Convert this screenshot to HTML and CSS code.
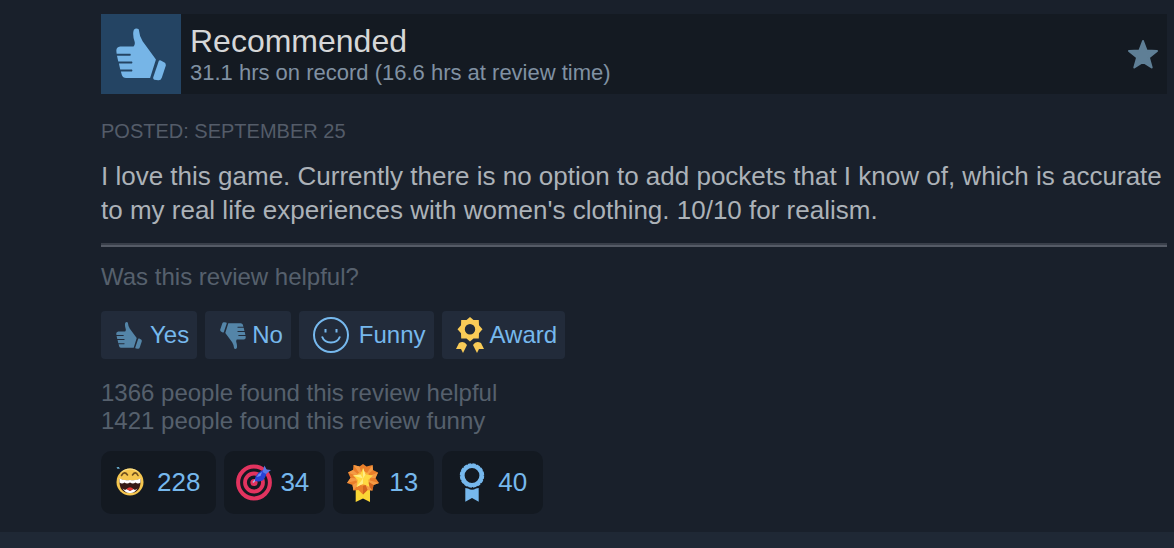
FILE: index.html
```html
<!DOCTYPE html>
<html lang="en">
<head>
  <meta charset="UTF-8" />
  <title>Review</title>
  <meta name="viewport" content="width=device-width, initial-scale=1.0" />
  <link rel="stylesheet" href="styles.css">
</head>
<body>

<!-- Shared icons -->
<svg class="icon-defs" aria-hidden="true">
  <symbol id="thumb" viewBox="48 42 154 161">
    <path d="M103 46Q110 39 118 45Q120 66 130 82L171 138L153 195H79Q69 195 66 186L63 175H97Q100 172 97 169H61L57 150H97Q100 147 97 144H55L51 126H92Q95 123 92 120H50L49 111Q49 99 61 98H102Q108 92 105 82Q98 60 103 46Z"/>
    <path d="M180 142Q182 139 186 141L197 147Q203 151 201 158L189 194Q186 203 178 202L166 200Q161 198 163 192Z"/>
  </symbol>
</svg>

<article class="review">
  <header class="review-header">
    <div class="thumb-box">
      <svg class="thumb-big"><use href="#thumb"/></svg>
    </div>
    <div class="verdict">
      <h1 class="title">Recommended</h1>
      <p class="hours">31.1 hrs on record (16.6 hrs at review time)</p>
    </div>
    <svg class="star" viewBox="0 0 30 29">
      <path d="M15 1L18.6 10.6L29 11L20.9 17.5L23.700 27.500L15 21.800L6.300 27.500L9.100 17.500L1 11L11.400 10.600Z"/>
    </svg>
  </header>

  <p class="posted">Posted: September 25</p>
  <p class="content">I love this game. Currently there is no option to add pockets that I know of, which is accurate to my real life experiences with women's clothing. 10/10 for realism.</p>

  <hr class="divider">

  <p class="question">Was this review helpful?</p>
  <div class="controls">
    <button class="btn" type="button">
      <svg class="thumb-small"><use href="#thumb"/></svg>
      Yes
    </button>
    <button class="btn btn-no" type="button">
      <svg class="thumb-small thumb-down"><use href="#thumb"/></svg>
      No
    </button>
    <button class="btn btn-funny" type="button">
      <svg class="smile" viewBox="0 0 36 36">
        <circle cx="18" cy="18" r="17"/>
        <path d="M12.500 12v3.500M23.500 12v3.500M9 19.500C12 27.500 24 27.500 27 19.500"/>
      </svg>
      Funny
    </button>
    <button class="btn btn-award" type="button">
      <svg class="award" viewBox="0 0 29 37">
        <path fill-rule="evenodd" d="M15 0L18.500 3L23.800 3L24 8.300L27.500 12.300L24 16.300L23.800 21.600L18.500 21.600L15 24.600L11.500 21.600L6.200 21.600L6 16.300L2.500 12.300L6 8.300L6.200 3L11.500 3ZM15 7.100a5.200 5.200 0 1 0 0 10.400a5.200 5.200 0 1 0 0-10.400Z"/>
        <path d="M1 32L4 26Q9 23 12 28L8 36L6 32ZM29 32L26 26Q21 23 18 28L22 36L24 32Z"/>
      </svg>
      Award
    </button>
  </div>

  <p class="stats">1366 people found this review helpful<br>1421 people found this review funny</p>

  <div class="awards">
    <button class="pill" type="button">
      <!-- laughing face -->
      <svg class="pill-icon" viewBox="0 0 36 36">
        <circle cx="17" cy="18" r="13.500" fill="#f5c64f"/>
        <path d="M7 9A13.500 13.500 0 0 1 27 9Q17 2 7 9Z" fill="#fbe08a"/>
        <path d="M8.500 11.500Q11.500 6.500 14.500 11M19.500 11Q22.500 6.500 25 11.500" fill="none" stroke="#72511f" stroke-width="1.600" stroke-linecap="round"/>
        <path d="M6.500 15Q17 18 27.500 15Q28.500 29 17 29Q5.500 29 6.500 15Z" fill="#351b17"/>
        <path d="M6.500 14.500Q11 17 17 16Q23 17 27.500 14.500V18.500Q25 20.500 22.500 18.500Q20 20.500 17 18.500Q14 20.500 11.500 18.500Q9 20.500 6.500 18.500Z" fill="#fff"/>
        <path d="M9.500 24.500L12 26L14 25L17 27L20 25L22 26L24.500 24.500Q21 29.500 17 29Q13 29.500 9.500 24.500Z" fill="#fff"/>
        <path d="M13.500 25Q17 21.500 20.500 25Q17 28 13.500 25Z" fill="#e23a35"/>
        <path d="M3.500 3.500L5.500 3L7 4.500L4.500 4.800Z" fill="#78c8ee"/>
      </svg>
      228
    </button>
    <button class="pill" type="button">
      <!-- target with dart -->
      <svg class="pill-icon" viewBox="0 0 36 36">
        <g fill="none" stroke="#e2335f">
          <circle cx="18" cy="18.500" r="15.900" stroke-width="4"/>
          <circle cx="18" cy="18.500" r="9" stroke-width="3.800"/>
        </g>
        <circle cx="18" cy="18.500" r="3.600" fill="#e2335f"/>
        <path d="M17 18.500L21 14" stroke="#a8b8ec" stroke-width="1.500"/>
        <path d="M19 17Q18.500 11 25 7L28.500 5.500L30.500 9.500Q28.500 18 22 17.500Z" fill="#2842d5"/>
        <path d="M20.500 13Q22 9.500 26 8L24.500 12Z" fill="#6f8df3"/>
        <path d="M26.500 8L28.500 1.500L30.500 5.500L35 6L30 10Z" fill="#5878e6"/>
      </svg>
      34
    </button>
    <button class="pill" type="button">
      <!-- gold rosette -->
      <svg class="pill-icon" viewBox="0 -1 36 36">
        <path d="M10.700 23H25V37L18 33.500L10.700 37Z" fill="#fbd735"/>
        <path d="M18 -1L21.500 1.500L27.500 0L28 5L33 7.500L30.500 13L34 18L28.500 20L27.500 25.500L22.500 25L18 29.500L13.500 25L8.500 25.500L7.500 20L2 18L5.500 13L3 7.500L8 5L8.500 0L14.500 1.500Z" fill="#ea7f2a"/>
        <path d="M18 13.500L8.500 0L14.500 1.500ZM18 13.500L27.500 0L28 5ZM18 13.500L33 7.500L30.500 13ZM18 13.500L34 18L28.500 20ZM18 13.500L27.500 25.500L22.500 25ZM18 13.500L8.500 25.500L7.500 20ZM18 13.500L2 18L5.500 13ZM18 13.500L3 7.500L8 5Z" fill="#f59b45"/>
        <path d="M18 13.500L22.500 25L18 29.500ZM18 13.500L27.500 25.500L28.500 20Z" fill="#d2641f"/>
        <circle cx="18" cy="13.500" r="7" fill="#fbb238"/>
        <path d="M18 3L20.500 9.500L28 10.500L23 15L24.500 22L18 18.800L11.500 22L13 15L8 10.500L15.500 9.500Z" fill="#ffd943"/>
        <path d="M18 3L20.500 9.500L18 13.500ZM8 10.500L15.500 9.500L18 13.500ZM11.500 22L18 18.800V13.500Z" fill="#ffec84"/>
      </svg>
      13
    </button>
    <button class="pill" type="button">
      <!-- blue ribbon -->
      <svg class="pill-icon" viewBox="0 -1 36 36">
        <g fill="none" stroke="#76b8ed">
          <circle cx="18" cy="10.500" r="9.500" stroke-width="4.200"/>
          <circle cx="18" cy="10.500" r="11.500" stroke-width="1.400" stroke-dasharray="3.500 1.016"/>
        </g>
        <path d="M11.300 23L14 23.500Q18 26 22 23.500L24.700 23V36.700L18 33L11.300 36.700Z" fill="#76b8ed"/>
      </svg>
      40
    </button>
  </div>
</article>

</body>
</html>
```

FILE: styles.css
```css
body {
  margin: 0;
  background: #1f2835;
  color: #acb2b8;
  font-family: "Liberation Sans", Arial, sans-serif;
}

h1, p {
  margin: 0;
  font-weight: normal;
}

button {
  border: none;
  color: #76b8ed;
  font-family: inherit;
  cursor: pointer;
}

svg {
  flex-shrink: 0;
  overflow: visible;
}

.icon-defs {
  display: none;
}

.review {
  padding: 14px 7px 18px 101px;
  background: #19202b;
}

/* Header */
.review-header {
  display: flex;
  align-items: center;
  height: 80px;
  background: #141a22;
}

.thumb-box {
  display: flex;
  align-items: center;
  justify-content: center;
  width: 80px;
  height: 80px;
  background: #244463;
}

.thumb-big {
  width: 50px;
  height: 53px;
  fill: #76b5e7;
}

.verdict {
  flex-grow: 1;
  padding: 2px 0 0 9px;
}

.title {
  color: #d6d7d8;
  font-size: 32px;
  line-height: 36px;
}

.hours {
  color: #8091a2;
  font-size: 22px;
  line-height: 28px;
}

.star {
  width: 30px;
  height: 29px;
  margin-right: 9px;
  fill: #5f7f96;
  stroke: #5f7f96;
  stroke-width: 2;
  stroke-linejoin: round;
}

/* Text */
.posted {
  margin-top: 25px;
  color: #545c69;
  font-size: 20px;
  line-height: 24px;
  text-transform: uppercase;
}

.content {
  margin-top: 16px;
  font-size: 26px;
  line-height: 34px;
}

.divider {
  height: 2px;
  margin: 16px 0;
  border: none;
  border-top: 2px solid #393f4a;
  background: #555b66;
}

.question,
.stats {
  color: #56606d;
  font-size: 24px;
  line-height: 28px;
}

/* Buttons */
.controls {
  display: flex;
  flex-wrap: wrap;
  gap: 8px;
  margin: 20px 0;
}

.btn {
  display: flex;
  align-items: center;
  gap: 8px;
  height: 48px;
  padding: 0 8px 0 15px;
  border-radius: 4px;
  background: #222b3a;
  font-size: 24px;
}

.btn-no {
  gap: 6px;
}

.btn-funny {
  gap: 10px;
  padding-left: 14px;
}

.btn-award {
  gap: 6px;
  padding-left: 13px;
}

.thumb-small {
  width: 26px;
  height: 27px;
  fill: #5485a8;
}

.thumb-down {
  transform: rotate(180deg);
}

.smile {
  width: 36px;
  height: 36px;
  fill: none;
  stroke: #76b8ed;
  stroke-width: 2;
}

.award {
  width: 29px;
  height: 37px;
  fill: #f9cb57;
}

/* Awards */
.awards {
  display: flex;
  flex-wrap: wrap;
  gap: 8px;
  margin-top: 16px;
}

.pill {
  display: flex;
  align-items: center;
  gap: 8px;
  padding: 13px 16px 14px 12px;
  border-radius: 10px;
  background: #131921;
  font-size: 26px;
}

.pill-icon {
  width: 36px;
  height: 36px;
}
```
